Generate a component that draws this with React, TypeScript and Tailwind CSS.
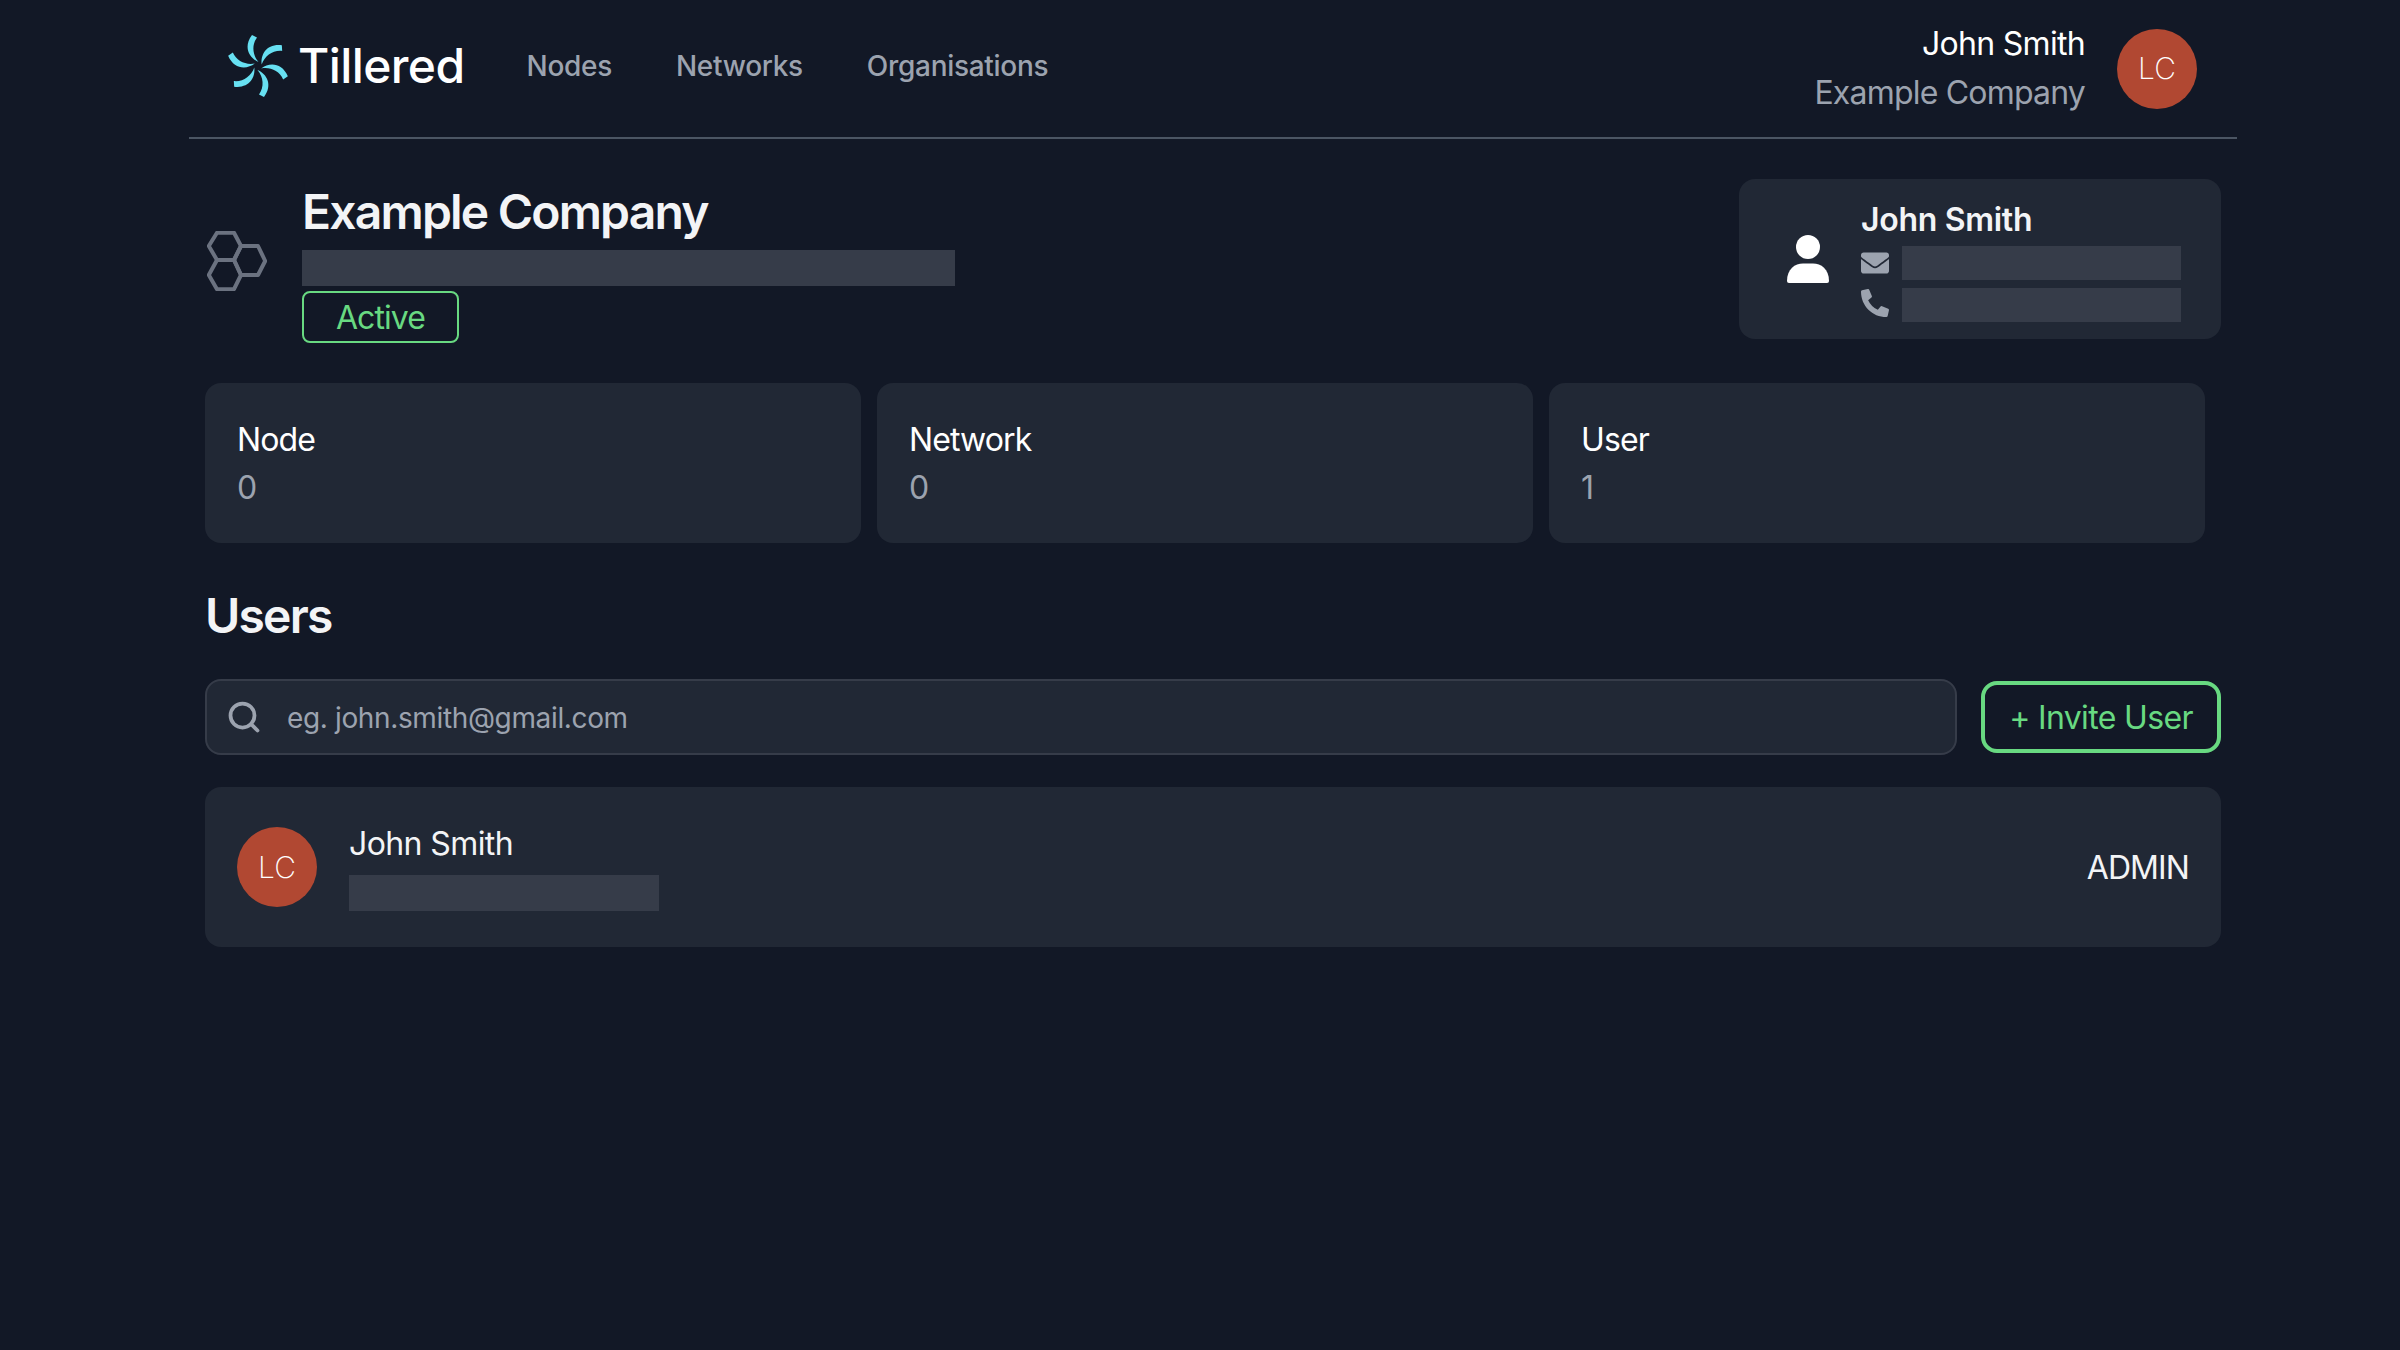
import { Search } from 'lucide-react'
import { FaEnvelope, FaPhoneAlt } from 'react-icons/fa'

const BLADE_ANGLES = [0, 60, 120, 180, 240, 300]

const STATS = [
  { label: 'Node', value: 0 },
  { label: 'Network', value: 0 },
  { label: 'User', value: 1 },
]

function Logo() {
  return (
    <svg width={60} height={64} viewBox="-30 -32 60 64" className="shrink-0" aria-hidden="true">
      {BLADE_ANGLES.map((angle) => (
        <path
          key={angle}
          transform={`rotate(${angle})`}
          d="M0.5 -4 C-9 -8 -15 -19 -6 -31 L-1 -28.5 C-6.5 -21 -5.5 -11 0.5 -4 Z"
          fill="#67e0f2"
        />
      ))}
    </svg>
  )
}

function HexIcon() {
  return (
    <svg width={60} height={60} viewBox="0 0 60 60" fill="none" stroke="#6b7280" strokeWidth={4} strokeLinejoin="round" className="shrink-0" aria-hidden="true">
      <path d="M1.8 15 L10 1.8 H27 L34 15 L27 29 H10 Z" />
      <path d="M27 29 L34 15 H51 L58.2 30 L51 44 H34 Z" />
      <path d="M10 29 H27 L34 44 L27 58.2 H10 L1.8 44 Z" />
    </svg>
  )
}

function PersonIcon() {
  return (
    <svg width={42} height={48} viewBox="0 0 42 48" fill="#ffffff" className="shrink-0" aria-hidden="true">
      <circle cx={21} cy={12} r={12} />
      <path d="M0 46 C0 34 8 28.5 16 28.5 H26 C34 28.5 42 34 42 46 Q42 48 40 48 H2 Q0 48 0 46 Z" />
    </svg>
  )
}

function Avatar() {
  return (
    <div className="flex h-20 w-20 shrink-0 items-center justify-center rounded-full bg-[#b14832] text-[30px] font-[250] text-white">
      LC
    </div>
  )
}

function Redacted({ className }: { className: string }) {
  return <div className={`bg-[#363c49] ${className}`} />
}

export default function App() {
  return (
    <div className="min-h-[1350px] bg-[#121826] pl-[189px] font-['Inter',sans-serif] text-white">
      <div className="w-[2048px]">
        <header className="flex h-[139px] items-center justify-between border-b-2 border-[#4b5563] pl-[39px] pr-10">
          <div className="flex items-center pb-[6px]">
            <div className="flex items-center gap-[10px]">
              <Logo />
              <span className="text-[48px] font-medium leading-[64px] tracking-[-0.6px]">Tillered</span>
            </div>
            <nav className="ml-[62px] flex gap-[64px] text-[28px] font-medium leading-10 tracking-[-0.3px] text-[#9ca3af]">
              <span>Nodes</span>
              <span>Networks</span>
              <span>Organisations</span>
            </nav>
          </div>
          <div className="flex items-center gap-8">
            <div className="text-right text-[32px] leading-[48px] tracking-[-0.7px]">
              <div>John Smith</div>
              <div className="pt-[1px] tracking-[-0.8px] text-[#9ca3af]">Example Company</div>
            </div>
            <Avatar />
          </div>
        </header>

        <main className="w-[2032px] pl-4">
          <section className="mt-10 flex items-start justify-between">
            <div className="flex items-center gap-[35px] pl-0.5">
              <HexIcon />
              <div>
                <h1 className="text-[48px] font-semibold leading-[66px] tracking-[-1.8px] text-[#f3f4f6]">Example Company</h1>
                <Redacted className="mt-[5px] h-9 w-[653px]" />
                <div className="mt-[5px] flex h-[52px] w-[157px] items-center justify-center rounded-lg border-2 border-[#68d981] pt-[2px] text-[32px] tracking-[-0.9px] text-[#68d981]">
                  Active
                </div>
              </div>
            </div>
            <div className="flex h-40 w-[482px] items-center gap-[32px] rounded-2xl bg-[#212835] pl-12">
              <PersonIcon />
              <div className="pb-[2px]">
                <div className="text-[32px] font-semibold leading-[50px] tracking-[-0.3px] text-[#f3f4f6]">John Smith</div>
                <div className="mt-[1px] flex items-center gap-[13px] text-[#9ca3af]">
                  <FaEnvelope size={28} />
                  <Redacted className="h-[34px] w-[279px]" />
                </div>
                <div className="mt-2 flex items-center gap-[13px] text-[#9ca3af]">
                  <FaPhoneAlt size={28} className="-translate-y-[2px]" />
                  <Redacted className="h-[34px] w-[279px]" />
                </div>
              </div>
            </div>
          </section>

          <section className="mt-10 flex gap-4">
            {STATS.map((stat) => (
              <div key={stat.label} className="h-40 w-[656px] rounded-2xl bg-[#212835] px-8 pt-[33px] text-[32px] leading-[48px] tracking-[-0.9px]">
                <div>{stat.label}</div>
                <div className="text-[#9ca3af]">{stat.value}</div>
              </div>
            ))}
          </section>

          <h2 className="mt-[41px] text-[48px] font-semibold leading-[64px] tracking-[-1.8px] text-[#f3f4f6]">Users</h2>

          <section className="mt-[31px] flex items-center justify-between">
            <div className="flex h-[76px] w-[1752px] items-center gap-[25px] rounded-2xl border-2 border-[#363c49] bg-[#212835] pl-[19px]">
              <Search size={36} strokeWidth={2.5} className="text-[#9ca3af]" />
              <span className="pt-[2px] text-[28px] tracking-[-0.36px] text-[#9ca3af]">eg. john.smith@gmail.com</span>
            </div>
            <button className="flex h-[72px] w-[240px] items-center justify-center rounded-2xl border-4 border-[#68d981] pt-[2px] text-[32px] tracking-[-0.65px] text-[#68d981]">
              + Invite User
            </button>
          </section>

          <section className="mt-8 flex h-40 items-center justify-between rounded-2xl bg-[#212835] px-8">
            <div className="flex items-center gap-8">
              <Avatar />
              <div className="pb-[3px]">
                <div className="text-[32px] leading-[48px] tracking-[-0.6px] text-[#f3f4f6]">John Smith</div>
                <Redacted className="mt-[7px] h-9 w-[310px]" />
              </div>
            </div>
            <span className="pt-[2px] text-[32px] leading-[48px] tracking-[-0.9px] text-[#f3f4f6]">ADMIN</span>
          </section>
        </main>
      </div>
    </div>
  )
}
